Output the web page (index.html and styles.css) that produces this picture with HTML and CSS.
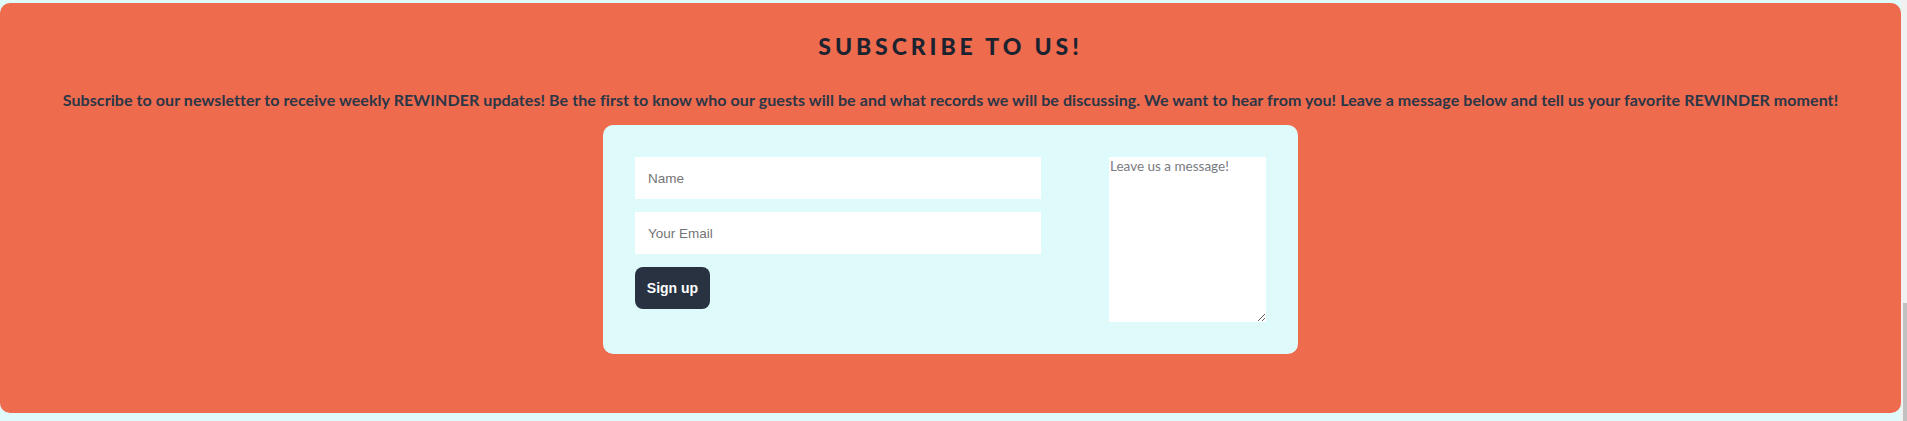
FILE: index.html
```html
<!DOCTYPE html>
<html lang="en">
<head>
<meta charset="utf-8">
<title>Subscribe</title>
<link rel="stylesheet" href="styles.css">
</head>
<body>
<div class="page">
  <main class="main">
    <section class="subscribe">
      <h2 class="subscribe-title">SUBSCRIBE TO US!</h2>
      <p class="subscribe-text">Subscribe to our newsletter to receive weekly REWINDER updates! Be the first to know who our guests will be and what records we will be discussing. We want to hear from you! Leave a message below and tell us your favorite REWINDER moment!</p>
      <form class="card">
        <div class="fields">
          <input class="field" type="text" placeholder="Name">
          <input class="field" type="email" placeholder="Your Email">
          <button class="btn" type="button">Sign up</button>
        </div>
        <textarea class="message" placeholder="Leave us a message!"></textarea>
      </form>
    </section>
  </main>
  <div class="scrollbar"><div class="thumb"></div></div>
</div>
</body>
</html>
```

FILE: styles.css
```css
* { box-sizing: border-box; }
html, body { margin: 0; padding: 0; }
body {
  background: #e0fafa;
  font-family: "Lato", "Noto Sans", sans-serif;
  height: 421px;
  overflow: hidden;
}
.page {
  display: flex;
  height: 421px;
}
.main {
  flex: 1;
  padding-top: 3px;
}
.scrollbar {
  width: 6px;
  background: #f1f1f1;
  display: flex;
  flex-direction: column;
  justify-content: flex-end;
  padding-left: 2px;
}
.thumb {
  height: 118px;
  background: #c1c1c1;
}
.subscribe {
  background: #ee6b4e;
  border-radius: 10px;
  height: 410px;
  padding: 29px 0 0;
  display: flex;
  flex-direction: column;
  align-items: center;
}
.subscribe-title {
  margin: 0;
  font-size: 23px;
  line-height: 28px;
  font-weight: 900;
  letter-spacing: 3.9px;
  color: #1c2330;
}
.subscribe-text {
  margin: 28px 0 0;
  font-size: 16px;
  line-height: 24px;
  font-weight: 700;
  letter-spacing: 0.08px;
  color: #2b3646;
  text-align: center;
  white-space: nowrap;
}
.card {
  margin-top: 13px;
  width: 695px;
  height: 229px;
  background: #dffafa;
  border-radius: 10px;
  padding: 32px;
  display: flex;
  justify-content: space-between;
  align-items: flex-start;
}
.fields {
  width: 406px;
  display: flex;
  flex-direction: column;
  align-items: flex-start;
  gap: 13px;
}
.field {
  width: 406px;
  height: 42px;
  border: none;
  background: #fff;
  padding: 0 13px;
  font-family: "Liberation Sans", Arial, sans-serif;
  font-size: 13.5px;
  color: #333;
  outline: none;
}
.field::placeholder { color: #757575; }
.btn {
  height: 42px;
  width: 75px;
  border: none;
  border-radius: 8px;
  background: #283241;
  color: #fff;
  font-family: "Liberation Sans", Arial, sans-serif;
  font-weight: 700;
  font-size: 14px;
  padding: 0;
}
.message {
  width: 157px;
  height: 165px;
  border: none;
  background: #fff;
  padding: 1px 1px;
  font-family: "Lato", "Noto Sans", sans-serif;
  font-size: 13.5px;
  resize: both;
  outline: none;
}
.message::placeholder { color: #777b80; }
```
